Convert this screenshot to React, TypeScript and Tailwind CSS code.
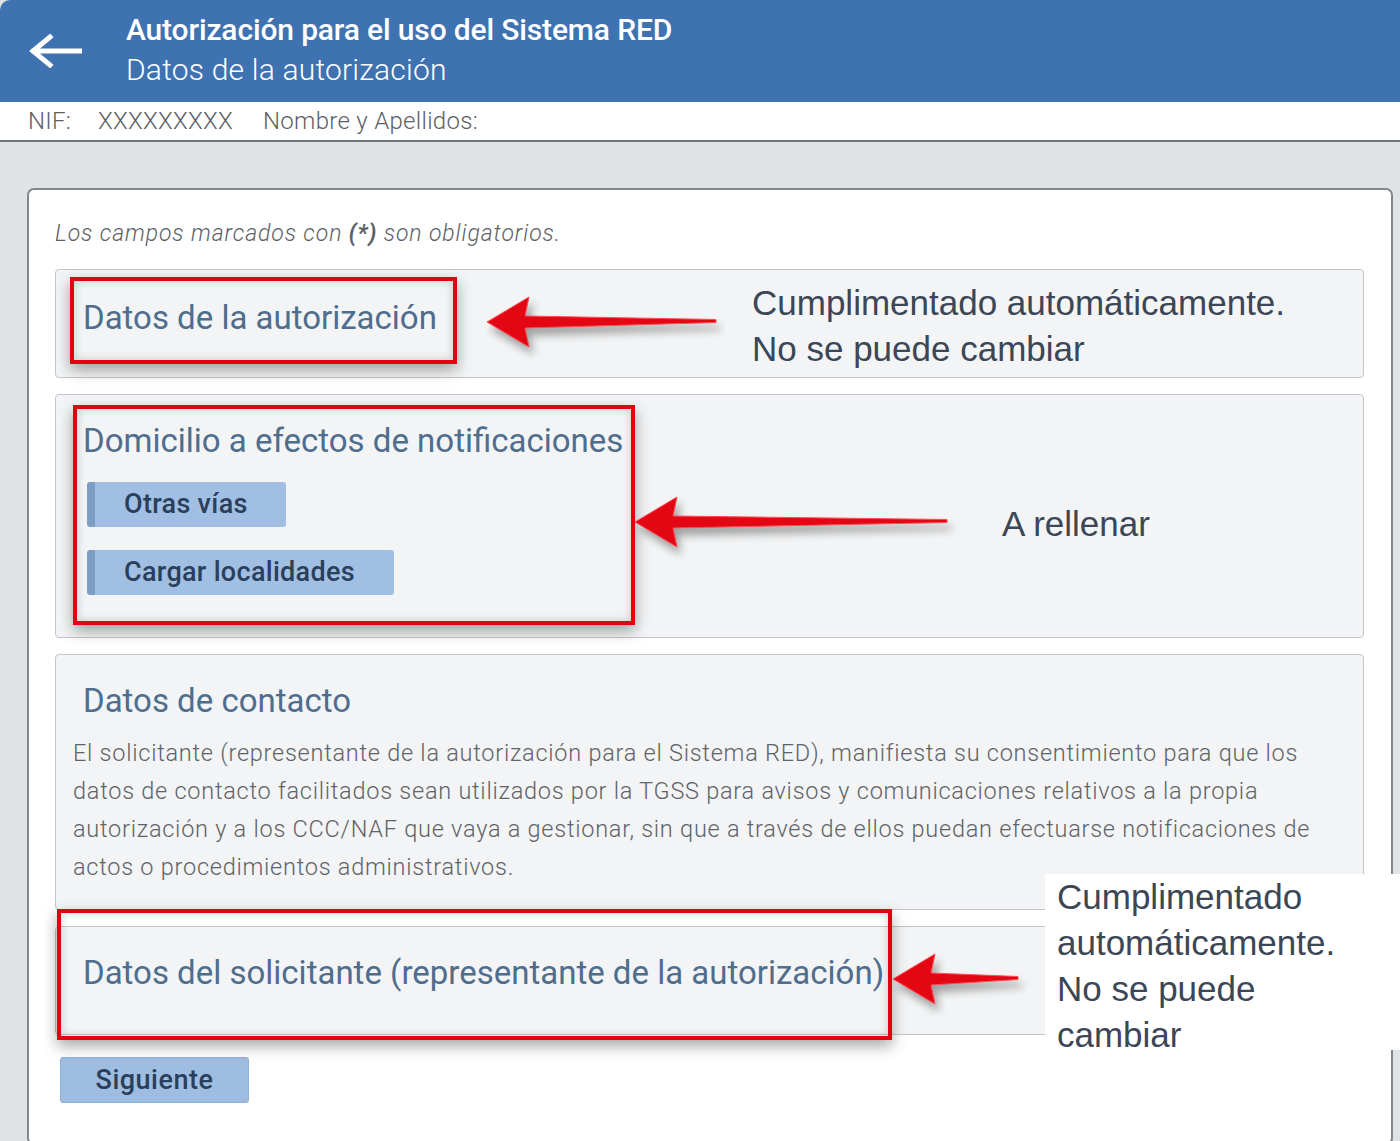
import React from "react";

// red annotation arrow, tip on the left
function RedArrow({ width, className = "" }: { width: number; className?: string }) {
  const h = 56;
  const pts = `0,28 42,3 38,22 ${width - 2},25.5 ${width - 2},28.5 38,34 42,53`;
  return (
    <svg
      width={width}
      height={h}
      viewBox={`0 0 ${width} ${h}`}
      className={`shrink-0 drop-shadow-[4px_7px_4px_rgba(0,0,0,0.35)] ${className}`}
    >
      <polygon points={pts} fill="#e30613" stroke="#ff4b55" strokeWidth="1" strokeLinejoin="round" />
    </svg>
  );
}

const redBox =
  "border-4 border-[#e3000f] shadow-[0_6px_14px_rgba(0,0,0,0.35),inset_0_0_10px_rgba(0,0,0,0.18)]";
const heading = "text-[33px] leading-[38px] text-[#4f6d8d]";
const note =
  "font-[family-name:'Liberation_Sans',Arial,sans-serif] text-[35px] leading-[46px] text-[#3b4656]";
const panel = "bg-[#f3f4f5] border border-[#c3c7cb] rounded-[4px]";
const btn =
  "h-[45px] bg-[#a0bfe2] rounded-[3px] border-l-[8px] border-[#7e9dc3] text-[27px] tracking-[0.3px] font-medium text-[#2a3f5c] pl-[29px] text-left";

export default function App() {
  return (
    <div className="relative h-[1141px] overflow-hidden bg-[#e1e2e3] font-[family-name:Roboto,'Liberation_Sans',sans-serif]">
      {/* Header */}
      <header className="h-[102px] bg-[#3f72b0] flex items-center rounded-tl-[10px]">
        <svg width="54" height="34" viewBox="0 0 54 34" className="ml-[28px] shrink-0">
          <path d="M52 17 H6 M22 3 L5 17 L22 31" fill="none" stroke="#fff" strokeWidth="5" strokeLinecap="square" />
        </svg>
        <div className="self-stretch ml-[44px] pt-[12px] text-white">
          <div className="text-[30px] leading-[36px] font-medium tracking-[-0.15px]">
            Autorización para el uso del Sistema RED
          </div>
          <div className="mt-[4px] text-[30px] leading-[36px] font-light tracking-[0.2px]">
            Datos de la autorización
          </div>
        </div>
      </header>

      {/* NIF strip */}
      <div className="h-[40px] bg-white border-b-2 border-[#70767b] flex items-center pl-[28px] text-[24px] text-[#5c6066] tracking-[0.3px] font-light">
        <span className="w-[70px]">NIF:</span>
        <span className="w-[165px]">XXXXXXXXX</span>
        <span>Nombre y Apellidos:</span>
      </div>

      {/* Card */}
      <div className="mt-[46px] ml-[27px] w-[1366px] bg-white border-2 border-[#80878d] rounded-[7px] pt-[30px] pl-[26px] pr-[27px] pb-[40px]">
        <p className="text-[23px] leading-[28px] italic font-light text-[#5d6166] tracking-[0.9px]">
          Los campos marcados con <span className="font-bold">(*)</span> son obligatorios.
        </p>

        <div className="mt-[21px] flex flex-col gap-[16px]">
          {/* Datos de la autorización */}
          <div className={`${panel} h-[109px] flex items-start pl-[14px] pt-[7px]`}>
            <div className={`${redBox} w-[387px] h-[87px] flex items-center pl-[9px] pb-[6px]`}>
              <h2 className={heading}>Datos de la autorización</h2>
            </div>
            <RedArrow width={231} className="ml-[30px] mt-[17px]" />
            <div className={`${note} ml-[34px] mt-[3px]`}>
              Cumplimentado automáticamente.
              <br />
              No se puede cambiar
            </div>
          </div>

          {/* Domicilio */}
          <div className={`${panel} h-[244px] flex items-start pl-[17px] pt-[10px]`}>
            <div className={`${redBox} w-[562px] h-[220px] pl-[6px] pt-[13px]`}>
              <h2 className={heading}>Domicilio a efectos de notificaciones</h2>
              <button className={`${btn} block ml-[4px] mt-[22px] w-[199px]`}>Otras vías</button>
              <button className={`${btn} block ml-[4px] mt-[23px] w-[307px]`}>Cargar localidades</button>
            </div>
            <RedArrow width={314} className="mt-[89px]" />
            <div className={`${note} ml-[53px] mt-[96px]`}>A rellenar</div>
          </div>

          {/* Datos de contacto */}
          <div className={`${panel} h-[256px] pl-[17px] pt-[27px]`}>
            <h2 className={`${heading} ml-[10px]`}>Datos de contacto</h2>
            <p className="mt-[14px] text-[23.5px] leading-[38px] font-light text-[#5f6368] tracking-[0.75px] whitespace-nowrap">
              El solicitante (representante de la autorización para el Sistema RED), manifiesta su consentimiento para que los
              <br />
              datos de contacto facilitados sean utilizados por la TGSS para avisos y comunicaciones relativos a la propia
              <br />
              autorización y a los CCC/NAF que vaya a gestionar, sin que a través de ellos puedan efectuarse notificaciones de
              <br />
              actos o procedimientos administrativos.
            </p>
          </div>

          {/* Datos del solicitante */}
          <div className={`${panel} relative h-[109px] pl-[27px] pt-[27px]`}>
            <h2 className={heading}>Datos del solicitante (representante de la autorización)</h2>
            <div className={`${redBox} absolute left-[1px] top-[-18px] w-[835px] h-[131px]`} />
            <RedArrow width={127} className="absolute left-[837px] top-[24px]" />
          </div>
        </div>

        <button className="mt-[22px] ml-[5px] w-[189px] h-[46px] bg-[#9ebde0] border border-[#8fb0d6] rounded-[3px] text-[27px] tracking-[0.5px] font-medium text-[#2a3f5c]">
          Siguiente
        </button>
      </div>

      {/* annotation pasted over the card */}
      <div className={`${note} absolute left-[1045px] top-[874px] w-[355px] h-[176px] bg-white pl-[12px] leading-[45.5px]`}>
        Cumplimentado
        <br />
        automáticamente.
        <br />
        No se puede
        <br />
        cambiar
      </div>
    </div>
  );
}
